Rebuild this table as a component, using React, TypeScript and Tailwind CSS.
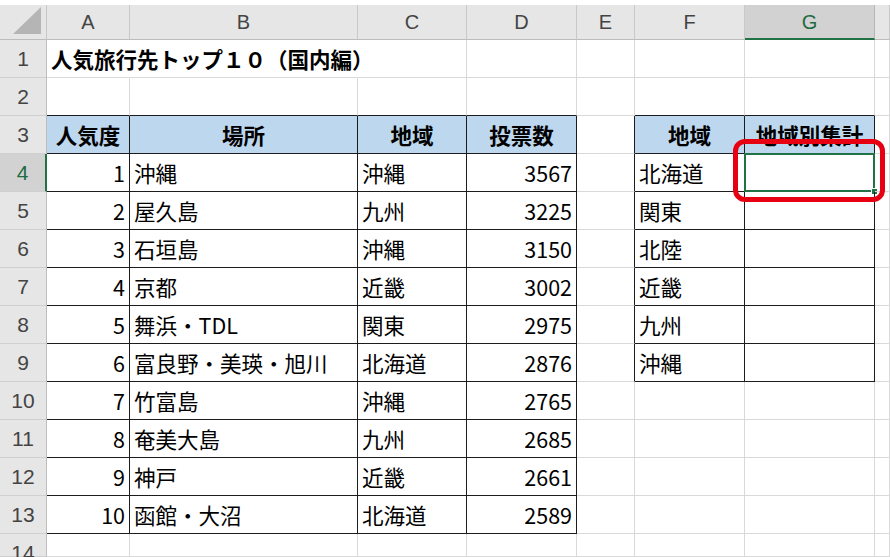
import React from "react"

type Cell = { v?: string | number; align?: "l" | "r" | "c"; bold?: boolean; head?: boolean }

const ranking: [number, string, string, number][] = [
  [1, "沖縄", "沖縄", 3567],
  [2, "屋久島", "九州", 3225],
  [3, "石垣島", "沖縄", 3150],
  [4, "京都", "近畿", 3002],
  [5, "舞浜・TDL", "関東", 2975],
  [6, "富良野・美瑛・旭川", "北海道", 2876],
  [7, "竹富島", "沖縄", 2765],
  [8, "奄美大島", "九州", 2685],
  [9, "神戸", "近畿", 2661],
  [10, "函館・大沼", "北海道", 2589],
]

const regions = ["北海道", "関東", "北陸", "近畿", "九州", "沖縄"]
// H is only partly on screen, so its letter is off to the right
const letters = ["A", "B", "C", "D", "E", "F", "G", ""]

function buildRow(r: number): Cell[] {
  const row: Cell[] = Array.from({ length: 8 }, () => ({}))
  if (r === 1) row[0] = { v: "人気旅行先トップ１０（国内編）", bold: true }
  if (r === 3) {
    row[0] = { v: "人気度", align: "c", bold: true, head: true }
    row[1] = { v: "場所", align: "c", bold: true, head: true }
    row[2] = { v: "地域", align: "c", bold: true, head: true }
    row[3] = { v: "投票数", align: "c", bold: true, head: true }
    row[5] = { v: "地域", align: "c", bold: true, head: true }
    row[6] = { v: "地域別集計", align: "c", bold: true, head: true }
  }
  const d = ranking[r - 4]
  if (d) {
    row[0] = { v: d[0], align: "r" }
    row[1] = { v: d[1] }
    row[2] = { v: d[2] }
    row[3] = { v: d[3], align: "r" }
  }
  const reg = regions[r - 4]
  if (reg) row[5] = { v: reg }
  return row
}

// which cells sit inside a bordered table
function inTable(r: number, c: number) {
  if (r >= 3 && r <= 13 && c >= 0 && c <= 3) return true
  if (r >= 3 && r <= 9 && (c === 5 || c === 6)) return true
  return false
}

function DataCell({ r, c, cell }: { r: number; c: number; cell: Cell }) {
  const h = r === 14 ? "h-[23px]" : "h-[38px]"
  const rightDark = inTable(r, c) || inTable(r, c + 1)
  const bottomDark = inTable(r, c) || inTable(r + 1, c)
  const hideRight = r === 1 && (c === 0 || c === 1)
  const right = hideRight ? "border-r-transparent" : rightDark ? "border-r-[#1c1c1c]" : "border-r-[#d9d9d9]"
  const bottom = bottomDark ? "border-b-[#1c1c1c]" : "border-b-[#d9d9d9]"
  const align = cell.align === "r" ? "justify-end" : cell.align === "c" ? "justify-center" : "justify-start"
  const selected = r === 4 && c === 6

  return (
    <div
      className={`relative flex items-center ${h} border-r border-b ${right} ${bottom} ${align} px-[4px] ${
        cell.head ? "bg-[#bdd7ee]" : ""
      }`}
    >
      {cell.v !== undefined && (
        <span
          className={`whitespace-nowrap text-[21.5px] leading-none text-black ${cell.bold ? "font-bold" : ""}`}
        >
          {cell.v}
        </span>
      )}
      {selected && (
        <>
          <div className="absolute -left-[1px] -top-[1px] w-[131px] h-[39px] border-2 border-[#217346]" />
          <div className="absolute -right-[4px] -bottom-[4px] w-[7px] h-[7px] bg-[#217346] border border-white" />
          <div className="absolute -left-[12px] -top-[15px] w-[152px] h-[63px] border-[5px] border-[#e60012] rounded-[12px] z-10" />
        </>
      )}
    </div>
  )
}

export default function App() {
  const rows = Array.from({ length: 14 }, (_, i) => i + 1)

  return (
    <div className="w-[890px] h-[557px] overflow-hidden bg-white font-['Noto_Sans_CJK_JP','Noto_Sans',sans-serif]">
      <div className="h-[5px]" />
      <div className="grid grid-cols-[47px_83px_228px_109px_110px_58px_110px_130px_1fr]">
        {/* corner */}
        <div className="relative h-[35px] bg-[#e6e6e6] border-r border-b border-r-[#c8c8c8] border-b-[#bdbdbd]">
          <svg className="absolute right-[5px] bottom-[5px]" width="28" height="27" viewBox="0 0 28 27">
            <polygon points="28,0 28,27 0,27" fill="#b5b5b5" />
          </svg>
        </div>
        {letters.map((l, i) => (
          <div
            key={i}
            className={`flex items-center justify-center h-[35px] border-r ${
              l === "G"
                ? "bg-[#d2d2d2] text-[#1e6b41] border-b-2 border-b-[#217346] border-r-[#b5b5b5]"
                : "bg-[#e6e6e6] text-[#444] border-b border-b-[#bdbdbd] border-r-[#c8c8c8]"
            } text-[20px] font-['Liberation_Sans','Noto_Sans',sans-serif]`}
          >
            {l}
          </div>
        ))}

        {rows.map((r) => {
          const cells = buildRow(r)
          return (
            <React.Fragment key={r}>
              <div
                className={`flex justify-center ${r === 14 ? "h-[23px] items-start pt-[3px]" : "h-[38px] items-center"} ${
                  r === 4
                    ? "bg-[#d2d2d2] text-[#1e6b41] border-r-2 border-r-[#217346]"
                    : "bg-[#e6e6e6] text-[#444] border-r border-r-[#bdbdbd]"
                } border-b border-b-[#cfcfcf] text-[21px] font-['Liberation_Sans','Noto_Sans',sans-serif]`}
              >
                {r}
              </div>
              {cells.map((cell, c) => (
                <DataCell key={c} r={r} c={c} cell={cell} />
              ))}
            </React.Fragment>
          )
        })}
      </div>
    </div>
  )
}
